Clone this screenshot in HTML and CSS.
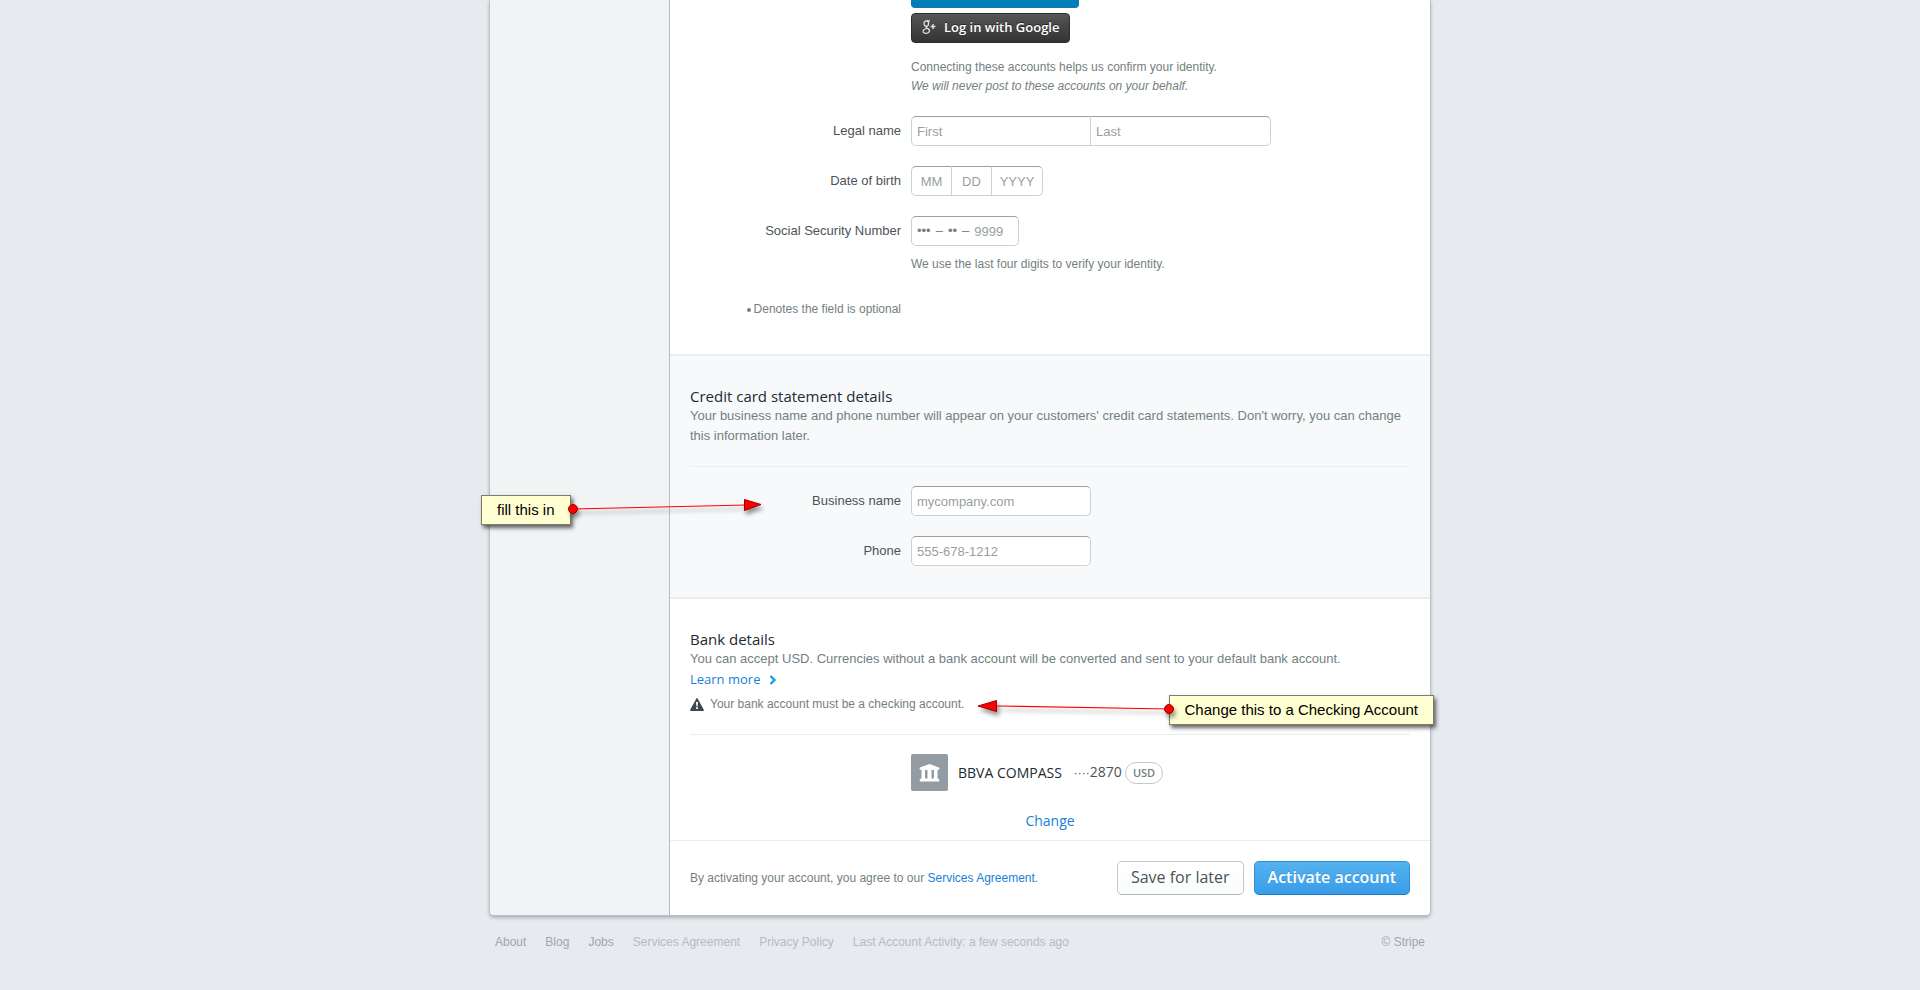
FILE: index.html
```html
<!DOCTYPE html>
<html lang="en">
<head>
    <meta charset="UTF-8">
    <meta name="viewport" content="width=device-width, initial-scale=1.0">
    <title>Activate account</title>
    <link rel="stylesheet" href="styles.css">
</head>
<body>
<div class="page">
    <div class="panel">
        <aside class="sidebar"></aside>
        <form class="main" action="#" method="post">
            <section class="section identity">
                <div class="field-body">
                    <button type="button" class="social linkedin" aria-label="Log in with LinkedIn"></button>
                    <button type="button" class="social google">
                        <svg width="14" height="16" viewBox="0 0 14 16" fill="none" stroke="#e4e4e4" stroke-width="1.2">
                            <ellipse cx="4.3" cy="4.6" rx="2.3" ry="2.7"/>
                            <path d="M5 1.9H8M5.4 7C3.6 7.8 3.8 8.8 5.4 9.4C7.2 10.1 7.8 11.2 7.3 12.5C6.5 14.8 2 14.8 1.2 13C0.6 11.2 2.4 9.8 5 9.5"/>
                            <path d="M8.6 7.5h4.8M11 5.1v4.8" stroke-width="1.4"/>
                        </svg>
                        Log in with Google
                    </button>
                    <p class="hint connect-hint">Connecting these accounts helps us confirm your identity.<br><em>We will never post to these accounts on your behalf.</em></p>
                </div>
                <div class="row">
                    <label for="first_name">Legal name</label>
                    <div class="group">
                        <input type="text" class="name" id="first_name" name="first_name" placeholder="First">
                        <input type="text" class="name" name="last_name" placeholder="Last" aria-label="Last name">
                    </div>
                </div>
                <div class="row">
                    <label for="dob_month">Date of birth</label>
                    <div class="group dob">
                        <input type="text" id="dob_month" name="dob_month" placeholder="MM">
                        <input type="text" name="dob_day" placeholder="DD" aria-label="Day of birth">
                        <input type="text" class="year" name="dob_year" placeholder="YYYY" aria-label="Year of birth">
                    </div>
                </div>
                <div class="row">
                    <label for="ssn">Social Security Number</label>
                    <div class="ssn">
                        <span>•••</span><span>–</span><span>••</span><span>–</span>
                        <input type="text" id="ssn" name="ssn" placeholder="9999">
                    </div>
                </div>
                <p class="hint field-body ssn-hint">We use the last four digits to verify your identity.</p>
                <p class="hint optional"><i class="bullet"></i>Denotes the field is optional</p>
            </section>

            <section class="section statement">
                <header class="section-header">
                    <h2>Credit card statement details</h2>
                    <p>Your business name and phone number will appear on your customers' credit card statements. Don't worry, you can change this information later.</p>
                </header>
                <div class="row">
                    <label for="business_name">Business name</label>
                    <input type="text" class="medium" id="business_name" name="business_name" placeholder="mycompany.com">
                </div>
                <div class="row">
                    <label for="phone">Phone</label>
                    <input type="text" class="medium" id="phone" name="phone" placeholder="555-678-1212">
                </div>
            </section>

            <section class="section bank">
                <header class="section-header">
                    <h2>Bank details</h2>
                    <p>You can accept USD. Currencies without a bank account will be converted and sent to your default bank account.</p>
                    <a href="#" class="learn-more">Learn more
                        <svg width="8" height="12" viewBox="0 0 8 12"><path d="M1.5 3L5.5 7L1.5 11" fill="none" stroke="#1b9ae8" stroke-width="2.4"/></svg>
                    </a>
                    <div class="hint warning">
                        <svg width="14" height="13" viewBox="0 0 14 13">
                            <path d="M7 0.8L13.2 12.2H0.8Z" fill="#3b4a54" stroke="#3b4a54" stroke-width="1.4" stroke-linejoin="round"/>
                            <path d="M6 4h2l-0.4 4.4h-1.2zM6.1 9.3h1.8v1.7h-1.8z" fill="#fff"/>
                        </svg>
                        Your bank account must be a checking account.
                    </div>
                </header>
                <div class="field-body account">
                    <span class="bank-icon">
                        <svg width="21" height="18" viewBox="0 0 21 18" fill="#fff">
                            <path d="M10.5 0L20 3.5C20.6 3.8 20.6 5.5 20 5.8H18.5V14.2L20.2 15.2V17.5H0.8V15.2L2.5 14.2V5.8H1C0.4 5.5 0.4 3.8 1 3.5ZM6 6V14.5H8.5V6ZM12.5 6V14.5H15V6Z" fill-rule="evenodd"/>
                        </svg>
                    </span>
                    <span class="bank-name">BBVA COMPASS</span>
                    <span class="digits"><span class="dots">····</span>2870</span>
                    <span class="currency">USD</span>
                </div>
                <div class="field-body change"><a href="#">Change</a></div>
            </section>

            <div class="actions">
                <p class="hint">By activating your account, you agree to our <a href="#">Services Agreement</a>.</p>
                <button type="button" class="button">Save for later</button>
                <button type="submit" class="button primary">Activate account</button>
            </div>
        </form>
    </div>

    <footer class="footer">
        <a href="#" class="strong">About</a>
        <a href="#" class="strong">Blog</a>
        <a href="#" class="strong">Jobs</a>
        <a href="#">Services Agreement</a>
        <a href="#">Privacy Policy</a>
        <a href="#">Last Account Activity: a few seconds ago</a>
        <span class="copyright">© Stripe</span>
    </footer>

    <!-- notes over the form -->
    <div class="note note-fill">fill this in</div>
    <svg class="arrow arrow-fill" width="204" height="30" viewBox="0 0 204 30">
        <path d="M7 14L180 10" stroke="#f00" stroke-width="1.2"/>
        <path d="M178.500 4.500V15.500L195 9.500Z" fill="#f00" stroke="#900"/>
        <circle cx="7" cy="14" r="4.500" fill="#f00" stroke="#900"/>
    </svg>
    <div class="note note-checking">Change this to a Checking Account</div>
    <svg class="arrow arrow-checking" width="206" height="30" viewBox="0 0 206 30">
        <path d="M24 11L197 14" stroke="#f00" stroke-width="1.2"/>
        <path d="M24.500 5.500V16.500L6 11Z" fill="#f00" stroke="#900"/>
        <circle cx="197" cy="14" r="4.500" fill="#f00" stroke="#900"/>
    </svg>
</div>
</body>
</html>
```
FILE: styles.css
```css
* {
    box-sizing: border-box;
    margin: 0;
    padding: 0;
}

body {
    background-color: #e7eaef;
    color: #4b5358;
    font-family: "Liberation Sans", Arial, sans-serif;
    font-size: 13px;
    line-height: 20px;
}

a {
    color: #1a80d9;
    text-decoration: none;
}

.page {
    position: relative;
    max-width: 940px;
    margin: 0 auto;
}

.panel {
    display: flex;
    background-color: #fff;
    border-radius: 0 0 4px 4px;
    box-shadow: 0 0 0 1px #bcc1c8, 0 2px 4px rgba(0, 0, 0, 0.35);
    overflow: hidden;
}

.sidebar {
    width: 180px;
    flex-shrink: 0;
    background-color: #f1f3f5;
    border-right: 1px solid #b5bdc8;
}

.main {
    flex: 1;
}

.section {
    padding: 30px 20px;
    border-bottom: 2px solid #ebeef1;
}

.identity {
    padding-top: 0;
    padding-bottom: 35px;
}

.statement {
    padding-bottom: 31px;
    background-color: #f7f9fb;
}

.bank {
    padding-bottom: 8px;
    border-bottom-width: 1px;
}

.field-body {
    margin-left: 221px;
}

.row {
    display: grid;
    grid-template-columns: 211px 1fr;
    gap: 10px;
    margin-bottom: 20px;
}

.statement .row:last-child {
    margin-bottom: 0;
}

.row label {
    padding-top: 5px;
    text-align: right;
}

.hint {
    color: #74807f;
    font-size: 12px;
}

.social {
    display: flex;
    align-items: center;
    border: 1px solid #2d2d2d;
    border-radius: 4px;
}

.linkedin {
    width: 168px;
    height: 8px;
    background-color: #017eba;
    border-color: #1a79aa;
    border-top: 0;
    border-radius: 0 0 4px 4px;
}

.google {
    gap: 8px;
    height: 30px;
    margin-top: 5px;
    padding: 0 10px 2px;
    background: linear-gradient(#565656, #333);
    color: #fff;
    font-family: "Open Sans", sans-serif;
    font-size: 13px;
    font-weight: 600;
    text-shadow: 0 -1px 0 rgba(0, 0, 0, 0.5);
}

.connect-hint {
    margin: 15px 0 20px;
    line-height: 19px;
}

input {
    height: 30px;
    padding: 0 5px;
    border: 1px solid #ccd0d3;
    border-top-color: #989fa6;
    border-radius: 5px;
    background-color: #fff;
    color: #4b5358;
    font-family: inherit;
    font-size: 13px;
}

input::placeholder {
    color: #999fa0;
}

.group {
    display: flex;
}

.group input:not(:first-child) {
    border-left: 0;
    border-top-left-radius: 0;
    border-bottom-left-radius: 0;
}

.group input:not(:last-child) {
    border-top-right-radius: 0;
    border-bottom-right-radius: 0;
}

.name,
.medium {
    width: 180px;
}

.dob input {
    width: 40px;
    text-align: center;
}

.dob input:first-child {
    width: 41px;
}

.dob .year {
    width: 51px;
}

.ssn {
    display: flex;
    align-items: center;
    gap: 5px;
    width: 108px;
    height: 30px;
    padding-left: 5px;
    border: 1px solid #ccd0d3;
    border-top-color: #989fa6;
    border-radius: 5px;
    color: #74807f;
}

.ssn input {
    width: 40px;
    height: 26px;
    padding: 0;
    border: 0;
}

.ssn-hint {
    margin-top: -12px;
}

.optional {
    width: 211px;
    margin-top: 25px;
    text-align: right;
}

.bullet {
    display: inline-block;
    width: 4px;
    height: 4px;
    margin-right: 3px;
    border-radius: 50%;
    background-color: #74807f;
    vertical-align: 1px;
}

.section-header {
    margin-bottom: 19px;
    padding-bottom: 20px;
    border-bottom: 1px solid #ebeef0;
    color: #74807f;
}

h2 {
    color: #222b33;
    font-family: "Open Sans", sans-serif;
    font-size: 15px;
    font-weight: 400;
    line-height: 20px;
}

.learn-more {
    display: flex;
    align-items: center;
    gap: 9px;
    font-family: "Open Sans", sans-serif;
}

.warning {
    display: flex;
    align-items: center;
    gap: 6px;
    margin-top: 5px;
}

.account {
    display: flex;
    align-items: center;
    color: #222b33;
    font-family: "Open Sans", sans-serif;
    font-size: 14px;
}

.bank-icon {
    display: flex;
    align-items: center;
    justify-content: center;
    width: 37px;
    height: 37px;
    margin-right: 10px;
    border-radius: 2px;
    background-color: #939ba3;
}

.digits {
    margin: 0 3px 0 12px;
    color: #4b5358;
}

.dots {
    font-family: "Liberation Sans", sans-serif;
    font-size: 12px;
}

.currency {
    padding: 0 7px;
    border: 1px solid #c4cacb;
    border-radius: 11px;
    color: #74807f;
    font-size: 11px;
    font-weight: 600;
}

.change {
    width: 278px;
    margin-top: 20px;
    text-align: center;
}

.change a {
    font-family: "Open Sans", sans-serif;
    font-size: 14px;
}

.actions {
    display: flex;
    align-items: center;
    gap: 10px;
    padding: 20px;
}

.actions .hint {
    flex: 1;
}

.button {
    height: 34px;
    padding: 0 13px 2px;
    border: 1px solid #c3c9ce;
    border-bottom-color: #afb6bc;
    border-radius: 5px;
    background: linear-gradient(#fff, #fafbfb);
    color: #4b5358;
    font-family: "Open Sans", sans-serif;
    font-size: 16px;
}

.primary {
    border-color: #2f8fd5;
    border-bottom-color: #1d7cc4;
    background: linear-gradient(#53b3f0, #3a9ce9);
    color: #fff;
    font-weight: 600;
    text-shadow: 0 -1px 0 rgba(0, 0, 0, 0.15);
}

.footer {
    display: flex;
    gap: 19px;
    padding: 17px 5px;
    font-size: 12px;
}

.footer a {
    color: #b9bbbd;
}

.footer .strong,
.copyright {
    color: #a3a5a7;
}

.copyright {
    margin-left: auto;
}

.note {
    position: absolute;
    padding: 4px 15px;
    border: 1px solid #7c7c6c;
    background-color: #ffffd2;
    box-shadow: 2px 3px 4px rgba(0, 0, 0, 0.6);
    color: #000;
    font-size: 15px;
}

.note-fill {
    top: 495px;
    left: -9px;
}

.note-checking {
    top: 695px;
    right: -4px;
}

.arrow {
    position: absolute;
    filter: drop-shadow(2px 4px 2px rgba(0, 0, 0, 0.4));
}

.arrow-fill {
    top: 495px;
    left: 76px;
}

.arrow-checking {
    top: 695px;
    left: 482px;
}
```
